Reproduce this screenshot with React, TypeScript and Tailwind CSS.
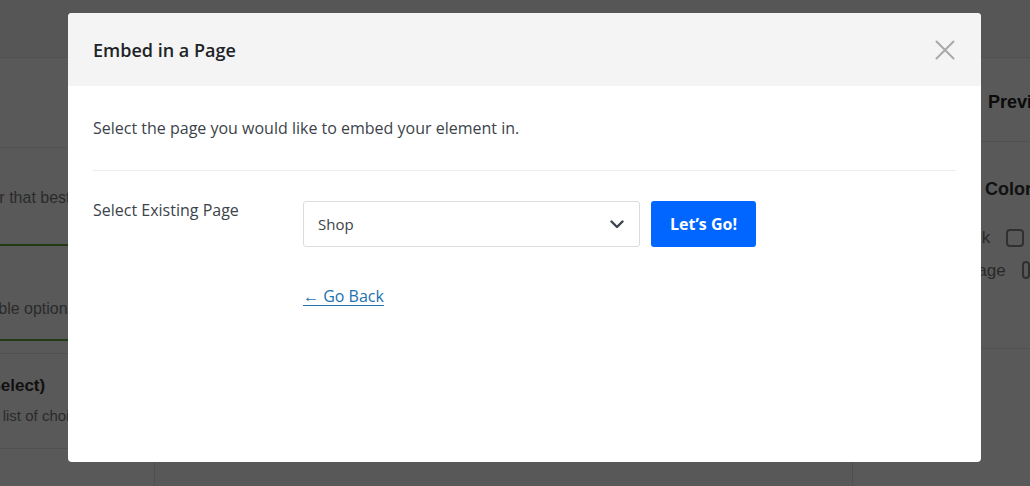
import React from "react";

function ChevronDown() {
  return (
    <svg width="14" height="9" viewBox="0 0 14 9" fill="none">
      <path d="M1.5 1.5 7 7l5.5-5.5" stroke="#3c434a" strokeWidth="2.4" strokeLinecap="round" strokeLinejoin="round" />
    </svg>
  );
}

function CloseIcon() {
  return (
    <svg width="20" height="20" viewBox="0 0 20 20" fill="none">
      <path d="M1.5 1.5l17 17M18.5 1.5l-17 17" stroke="#a7aaad" strokeWidth="2" strokeLinecap="round" />
    </svg>
  );
}

function Backdrop() {
  return (
    <div className="flex h-full flex-col bg-white font-['Liberation_Sans',Arial,sans-serif]">
      <div className="h-[58px] shrink-0 border-b border-[#e6e6e6] bg-[#f6f6f6]" />
      <div className="flex min-h-0 flex-1">
        {/* left settings column */}
        <aside className="flex w-[155px] shrink-0 flex-col overflow-hidden border-r border-[#e2e2e2]">
          <div className="h-[90px] shrink-0 border-b border-[#ebebeb]" />
          <p className="-ml-[78px] mt-[38px] whitespace-nowrap text-[16px] text-[#7a7a7a]">Pick a color that best</p>
          <div className="mt-[34px] h-[2px] shrink-0 bg-[#62a83c]" />
          <p className="-ml-[88px] mt-[51px] whitespace-nowrap text-[16px] text-[#7a7a7a]">Show available options</p>
          <div className="mt-[18px] h-[2px] shrink-0 bg-[#62a83c]" />
          <div className="mt-[12px] h-px shrink-0 bg-[#e8e8e8]" />
          <p className="-ml-[105px] mt-[19px] whitespace-nowrap text-[17px] font-bold text-[#333]">Dropdown (Select)</p>
          <p className="-ml-[59px] mt-[6px] whitespace-nowrap text-[15px] text-[#7a7a7a]">Shows a list of choices</p>
          <div className="mt-[21px] h-px shrink-0 bg-[#e8e8e8]" />
        </aside>
        <main className="flex-1 bg-[#fcfcfc]" />
        {/* right preview column */}
        <aside className="flex w-[178px] shrink-0 flex-col overflow-hidden border-l border-[#e2e2e2]">
          <p className="ml-[135px] mt-[31px] whitespace-nowrap text-[18px] font-bold text-[#222]">Preview</p>
          <div className="mt-[25px] h-px shrink-0 bg-[#e8e8e8]" />
          <p className="ml-[132px] mt-[34px] whitespace-nowrap text-[18px] font-bold text-[#333]">Colors</p>
          <div className="ml-[106px] mt-[22px] flex items-center gap-[16px] whitespace-nowrap text-[17px] text-[#777]">
            <span>Link</span>
            <span className="h-[18px] w-[18px] rounded-[4px] border-2 border-[#8a8a8a]" />
          </div>
          <div className="ml-[113px] mt-[7px] flex items-center gap-[16px] whitespace-nowrap text-[17px] text-[#777]">
            <span>Page</span>
            <span className="h-[18px] w-[18px] rounded-[4px] border-2 border-[#8a8a8a]" />
          </div>
          <div className="mt-[65px] h-px shrink-0 bg-[#e8e8e8]" />
        </aside>
      </div>
    </div>
  );
}

export default function App() {
  return (
    <div className="relative h-[486px] w-full overflow-hidden">
      <Backdrop />
      <div className="absolute inset-0 bg-black/65" />
      <div className="absolute inset-0 pl-[68px] pt-[13px]">
        <div className="flex h-[449px] w-[913px] flex-col overflow-hidden rounded-[4px] bg-white font-['Open_Sans','Noto_Sans',sans-serif]">
          <header className="flex h-[73px] shrink-0 items-center justify-between bg-[#f4f4f4] pl-[25px] pr-[26px]">
            <h2 className="pt-[2px] text-[18px] font-semibold text-[#1d2327]">Embed in a Page</h2>
            <CloseIcon />
          </header>
          <div className="px-[25px]">
            <p className="pb-[31px] pt-[31px] text-[16px] leading-[22px] text-[#3c434a]">
              Select the page you would like to embed your element in.
            </p>
            <div className="h-px bg-[#ececec]" />
            <div className="mt-[30px] flex">
              <label className="w-[210px] shrink-0 text-[16px] font-medium leading-[18px] text-[#3c434a]">
                Select Existing Page
              </label>
              <div className="flex flex-col">
                <div className="flex gap-[11px]">
                  <div className="flex h-[46px] w-[337px] items-center justify-between rounded-[3px] border border-[#dcdcde] pl-[14px] pr-[15px] text-[15px] text-[#3c434a]">
                    <span>Shop</span>
                    <ChevronDown />
                  </div>
                  <button className="h-[46px] w-[105px] rounded-[3px] bg-[#0066ff] text-[16px] font-bold text-white">
                    Let’s Go!
                  </button>
                </div>
                <a href="#" className="mt-[38px] self-start text-[16px] leading-[22px] text-[#2271b1] underline underline-offset-[3px]">
                  ← Go Back
                </a>
              </div>
            </div>
          </div>
        </div>
      </div>
    </div>
  );
}
